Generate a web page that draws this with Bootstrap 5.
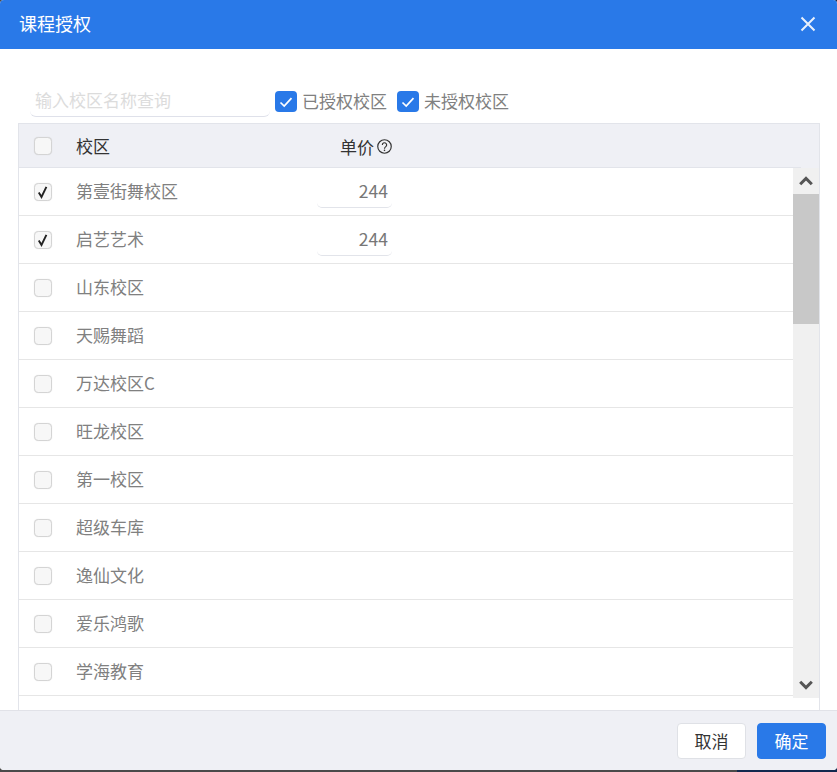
<!DOCTYPE html>
<html lang="zh-CN">
<head>
<meta charset="utf-8">
<title>课程授权</title>
<link href="https://cdn.jsdelivr.net/npm/bootstrap@5.3.0/dist/css/bootstrap.min.css" rel="stylesheet">
<style>
html,body{height:100%;}
body{background:linear-gradient(90deg,#4a4a4a 737px,#12294f 737px);font-family:"Noto Sans CJK SC","Liberation Sans",sans-serif;font-size:17px;color:#808080;overflow:hidden;}
.dlg{height:770px;background:#fff;border:0;border-radius:4px;overflow:hidden;}
.dlg-head{height:49px;background:#2979e8;color:#fff;padding:0 21px 0 19px;border:0;border-radius:0;}
.dlg-title{font-size:18px;font-weight:400;line-height:1;margin:-4px 0 0;}
.dlg-close{background:none;border:0;padding:0;width:16px;height:16px;line-height:0;margin-top:-2px;}
.dlg-body{padding:35px 17px 0 18px;min-height:0;}
.filters{height:39px;padding:1px 0 6px 12px;}
.search{width:240px;height:32px;border:0;border-bottom:1px solid #dfe1ea;border-radius:0 0 6px 6px;padding:0 5px 2px;font-size:17px;outline:0;color:#777;background:#fff;}
.search::placeholder{color:#dcdcdc;}
.pick{margin-left:5px;margin-right:10px;height:22px;}
.pick .form-check-input{width:22px;height:21px;margin:1px 5px 0 0;border:0;border-radius:4px;background-color:#2979e8;background-size:14px 14px;
 background-image:url("data:image/svg+xml,%3csvg xmlns='http://www.w3.org/2000/svg' viewBox='0 0 14 14'%3e%3cpath fill='none' stroke='%23fff' stroke-width='1.7' d='M1.5 7.5l3.7 3.6 7.3-8'/%3e%3c/svg%3e");}
.pick span{line-height:22px;color:#808080;}
.pick-next{margin-left:0;}
.panel{border:1px solid #e2e4ea;border-bottom:0;min-height:0;height:587px;}
.thead-row{height:44px;background:#eff0f5;position:relative;color:#333;padding-left:15px;}
.thead-row::after{content:"";position:absolute;left:0;bottom:0;width:782px;height:1px;background:#e2e4ea;}
.tick{width:18px;height:18px;margin:0;flex:none;border:1px solid #d4d4d4;border-radius:4px;background-color:#f7f7f7;box-shadow:0 0 1px rgba(0,0,0,.15);}
.tick:checked{background-color:#f7f7f7;border-color:#d4d4d4;background-size:16px 16px;
 background-image:url("data:image/svg+xml,%3csvg xmlns='http://www.w3.org/2000/svg' viewBox='0 0 16 16'%3e%3cpath fill='none' stroke='%23222' stroke-width='1.9' d='M3.8 8.4l2.7 4.6L11.4 2.8'/%3e%3c/svg%3e");}
.name-cell{width:241px;margin-left:24px;flex:none;}
.data-row .name-cell{padding-bottom:2px;}
.price-head{width:75px;line-height:1;}
.help-icon{margin-left:3px;}
.scroll-wrap{min-height:0;flex:1 1 auto;}
.rows{min-width:0;overflow:hidden;}
.data-row{height:48px;flex:none;border-bottom:1px solid #e6e6e6;padding-left:15px;}
.price-box{width:75px;height:32px;border:0;border-bottom:1px solid #e2e4ea;border-radius:0 0 5px 5px;text-align:right;padding:0 4px 2px 0;font-size:17.5px;color:#777;outline:0;background:#fff;margin-top:1px;}
.rail{width:26px;height:530px;flex:none;background:#f0f0f0;}
.rail-btn{height:26px;}
.rail-thumb{height:130px;background:#c8c8c8;}
.dlg-foot{height:60px;background:#eff0f5;border-top:1px solid #e1e2e8;padding:0 11px 0 0;margin-top:auto;gap:11px;flex:none;}
.dlg-foot .btn{margin:0;width:69px;height:36px;padding:0;font-size:17px;border-radius:4px;line-height:34px;}
.btn-off{background:#fff;border:1px solid #dfe1e6;color:#333;}
.btn-on{background:#2979e8;border:1px solid #2979e8;color:#fff;}
</style>
</head>
<body>
<div class="modal-content dlg d-flex flex-column">
  <div class="modal-header dlg-head d-flex align-items-center justify-content-between">
    <h5 class="modal-title dlg-title">课程授权</h5>
    <button type="button" class="dlg-close" aria-label="关闭">
      <svg width="16" height="16" viewBox="0 0 16 16"><path d="M1.5 1.5l13 13M14.5 1.5l-13 13" stroke="#e8f0fc" stroke-width="2" fill="none"/></svg>
    </button>
  </div>
  <div class="modal-body dlg-body d-flex flex-column flex-grow-1">
    <div class="filters d-flex align-items-center">
      <input class="search" type="text" placeholder="输入校区名称查询">
      <label class="pick d-flex align-items-center"><input class="form-check-input" type="checkbox" checked><span>已授权校区</span></label>
      <label class="pick pick-next d-flex align-items-center"><input class="form-check-input" type="checkbox" checked><span>未授权校区</span></label>
    </div>
    <div class="panel d-flex flex-column">
      <div class="thead-row d-flex align-items-center flex-none">
        <input class="form-check-input tick" type="checkbox">
        <div class="name-cell">校区</div>
        <div class="price-head d-flex align-items-center justify-content-end">单价<svg class="help-icon" width="15" height="15" viewBox="0 0 14 14"><circle cx="7" cy="7" r="6.3" fill="none" stroke="#333" stroke-width="1.1"/><path d="M5 5.5a2 2 0 1 1 3.2 1.6C7.4 7.7 7 8 7 9" fill="none" stroke="#333" stroke-width="1.1"/><circle cx="7" cy="10.6" r=".75" fill="#333"/></svg></div>
      </div>
      <div class="scroll-wrap d-flex">
        <div class="rows flex-grow-1 d-flex flex-column">
          <div class="data-row d-flex align-items-center"><input class="form-check-input tick" type="checkbox" checked><div class="name-cell">第壹街舞校区</div><input class="price-box" type="text" value="244"></div>
          <div class="data-row d-flex align-items-center"><input class="form-check-input tick" type="checkbox" checked><div class="name-cell">启艺艺术</div><input class="price-box" type="text" value="244"></div>
          <div class="data-row d-flex align-items-center"><input class="form-check-input tick" type="checkbox"><div class="name-cell">山东校区</div></div>
          <div class="data-row d-flex align-items-center"><input class="form-check-input tick" type="checkbox"><div class="name-cell">天赐舞蹈</div></div>
          <div class="data-row d-flex align-items-center"><input class="form-check-input tick" type="checkbox"><div class="name-cell">万达校区C</div></div>
          <div class="data-row d-flex align-items-center"><input class="form-check-input tick" type="checkbox"><div class="name-cell">旺龙校区</div></div>
          <div class="data-row d-flex align-items-center"><input class="form-check-input tick" type="checkbox"><div class="name-cell">第一校区</div></div>
          <div class="data-row d-flex align-items-center"><input class="form-check-input tick" type="checkbox"><div class="name-cell">超级车库</div></div>
          <div class="data-row d-flex align-items-center"><input class="form-check-input tick" type="checkbox"><div class="name-cell">逸仙文化</div></div>
          <div class="data-row d-flex align-items-center"><input class="form-check-input tick" type="checkbox"><div class="name-cell">爱乐鸿歌</div></div>
          <div class="data-row d-flex align-items-center"><input class="form-check-input tick" type="checkbox"><div class="name-cell">学海教育</div></div>
        </div>
        <div class="rail d-flex flex-column" aria-hidden="true">
          <div class="rail-btn d-flex align-items-center justify-content-center"><svg width="14" height="10" viewBox="0 0 14 10"><path d="M1.2 8.2L7 2.4l5.8 5.8" fill="none" stroke="#555" stroke-width="3"/></svg></div>
          <div class="rail-thumb"></div>
          <div class="flex-grow-1"></div>
          <div class="rail-btn d-flex align-items-center justify-content-center"><svg width="14" height="10" viewBox="0 0 14 10"><path d="M1.2 1.8L7 7.6l5.8-5.8" fill="none" stroke="#555" stroke-width="3"/></svg></div>
        </div>
      </div>
    </div>
  </div>
  <div class="modal-footer dlg-foot d-flex align-items-center justify-content-end">
    <button type="button" class="btn btn-off">取消</button>
    <button type="button" class="btn btn-on">确定</button>
  </div>
</div>
<script src="https://cdn.jsdelivr.net/npm/bootstrap@5.3.0/dist/js/bootstrap.bundle.min.js"></script>
</body>
</html>
